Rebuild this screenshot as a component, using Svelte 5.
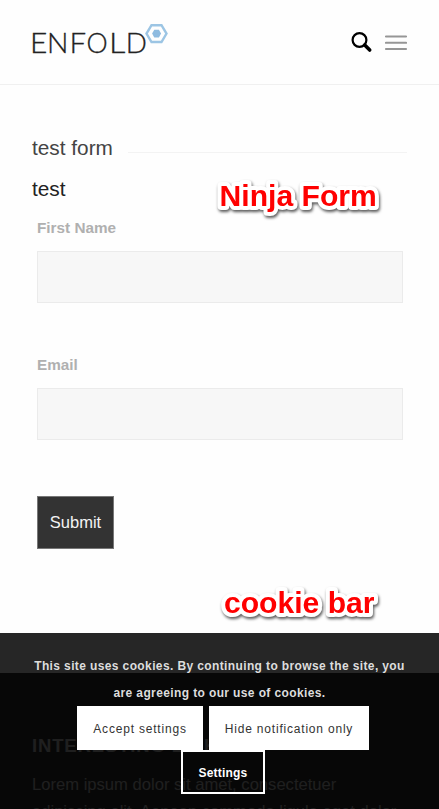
<script lang="ts">
  const fields = [
    { id: 'first-name', label: 'First Name', type: 'text' },
    { id: 'email', label: 'Email', type: 'email' },
  ];

  const logoLetters = [
    { char: 'E', x: 30, stretch: 1.13 },
    { char: 'N', x: 46.9, stretch: 1.07 },
    { char: 'F', x: 69.4, stretch: 1.11 },
    { char: 'O', x: 86.6, stretch: 1.01 },
    { char: 'L', x: 108.9, stretch: 1.22 },
    { char: 'D', x: 125.7, stretch: 1.05 },
  ];
</script>

<div class="page">
  <header class="header">
    <svg class="logo" width="140" height="44" viewBox="30 18 140 44" aria-label="Enfold">
      {#each logoLetters as letter (letter.char)}
        <text transform="translate({letter.x} 53) scale({letter.stretch} 1)" class="logo-text">{letter.char}</text>
      {/each}
      <path d="M151.5 25.2h10l5 8.4-5 8.4h-10l-5-8.4z" fill="none" stroke="#9cc5e4" stroke-width="2.4" />
      <path d="M154.3 29.7h4.6l2.2 3.9-2.2 3.9h-4.6l-2.2-3.9z" fill="#8ebbe0" />
    </svg>
    <div class="header-icons">
      <svg width="22" height="22" viewBox="0 0 22 22" aria-label="Search">
        <circle cx="8.5" cy="8" r="6.9" fill="none" stroke="#000" stroke-width="2.2" />
        <path d="M13.7 13l5 5" stroke="#000" stroke-width="3.6" stroke-linecap="round" />
      </svg>
      <svg width="22" height="16" viewBox="0 0 22 16" aria-label="Menu">
        <path d="M.8 1.5h20.4M.8 7.8h20.4M.8 14h20.4" stroke="#969696" stroke-width="1.9" stroke-linecap="round" />
      </svg>
    </div>
  </header>

  <main class="main">
    <div class="heading">
      <h1>test form</h1>
      <span class="rule"></span>
    </div>
    <h2>test</h2>

    <form class="form">
      {#each fields as field (field.id)}
        <div class="field">
          <label for={field.id}>{field.label}</label>
          <input id={field.id} type={field.type} />
        </div>
      {/each}
      <button class="submit" type="button">Submit</button>
    </form>
  </main>

  <footer class="footer">
    <h3>INTERESTING LINKS</h3>
    <p>Lorem ipsum dolor sit amet, consectetuer<br />adipiscing elit. Aenean commodo ligula eget dolor.</p>
  </footer>

  <svg class="callout callout-form" width="180" height="54">
    <text x="8.6" y="34">Ninja Form</text>
  </svg>
  <svg class="callout callout-cookie" width="180" height="54">
    <text x="8" y="34">cookie bar</text>
  </svg>

  <div class="cookie-bar">
    <p>This site uses cookies. By continuing to browse the site, you<br />are agreeing to our use of cookies.</p>
    <div class="cookie-actions">
      <button class="cookie-btn accept">Accept settings</button>
      <button class="cookie-btn hide">Hide notification only</button>
    </div>
    <button class="cookie-btn settings">Settings</button>
  </div>
</div>

<style>
  :global(body) {
    background: #fff;
  }

  .page {
    position: relative;
    display: flex;
    flex-direction: column;
    height: 809px;
    overflow: hidden;
    background: #fefefe;
    font-family: 'Liberation Sans', Arial, sans-serif;
  }

  h1, h2, h3, p {
    margin: 0;
    font-weight: 400;
  }

  button {
    font-family: inherit;
    border-radius: 0;
    white-space: nowrap;
  }

  .header {
    box-sizing: border-box;
    display: flex;
    flex-shrink: 0;
    justify-content: space-between;
    height: 85px;
    padding: 18px 32px 0 30px;
    border-bottom: 1px solid #f0f0f0;
  }
  .logo-text {
    font: 300 26.5px Lato, sans-serif;
    fill: #222;
    stroke: #222;
    stroke-width: 0.3px;
  }
  .header-icons {
    display: flex;
    align-items: center;
    gap: 12px;
    height: 50px;
  }

  .main {
    box-sizing: border-box;
    flex-shrink: 0;
    height: 588px;
    padding: 50px 32px 0;
  }
  .heading {
    display: flex;
    align-items: center;
    gap: 15px;
    height: 26px;
  }
  h1 {
    font-size: 20.8px;
    line-height: 26px;
    color: #444;
  }
  .rule {
    flex: 1;
    height: 1px;
    margin-top: 9px;
    background: #f3f3f3;
  }
  h2 {
    margin-top: 15px;
    font-size: 20.8px;
    line-height: 26px;
    color: #222;
  }

  .form {
    padding: 16px 5px 0;
  }
  .field {
    height: 137px;
  }
  .field label {
    display: block;
    margin-bottom: 13px;
    font-size: 15.3px;
    font-weight: 700;
    line-height: 20px;
    color: #b0b0b0;
  }
  .field input {
    box-sizing: border-box;
    display: block;
    width: 366px;
    height: 52px;
    padding: 0 12px;
    border: 1px solid #ebebeb;
    border-radius: 0;
    background: #f7f7f7;
  }
  .submit {
    box-sizing: border-box;
    display: block;
    width: 77px;
    height: 53px;
    margin-top: 4px;
    padding: 0;
    border: 1px solid #777;
    background: #333;
    color: #f3f3f3;
    font-size: 16.5px;
  }

  .footer {
    flex: 1;
    padding: 60px 32px 0;
    background: #333;
  }
  h3 {
    font-size: 18.5px;
    font-weight: 700;
    line-height: 26px;
    letter-spacing: 0.85px;
    color: #ccc;
  }
  .footer p {
    margin-top: 12px;
    font-size: 16.6px;
    line-height: 27px;
    color: #ccc;
    white-space: nowrap;
  }

  .callout {
    position: absolute;
    overflow: visible;
    font-size: 30.1px;
    font-weight: 700;
    filter: drop-shadow(1px 2px 1.5px rgba(0, 0, 0, 0.65));
  }
  .callout text {
    fill: #f00;
    stroke: #fff;
    stroke-width: 8px;
    stroke-linejoin: round;
    paint-order: stroke;
  }
  .callout-form {
    left: 211px;
    top: 172px;
  }
  .callout-cookie {
    left: 216px;
    top: 579px;
  }

  .cookie-bar {
    position: absolute;
    inset: auto 0 0;
    box-sizing: border-box;
    display: flex;
    flex-direction: column;
    align-items: center;
    height: 176px;
    padding-top: 20px;
    background: rgba(0, 0, 0, 0.85);
  }
  .cookie-bar p {
    height: 53px;
    font-size: 12px;
    font-weight: 700;
    line-height: 27px;
    letter-spacing: 0.38px;
    color: #ddd;
    text-align: center;
    white-space: nowrap;
  }
  .cookie-actions {
    display: flex;
    gap: 6px;
    margin-left: 7px;
  }
  .cookie-btn {
    box-sizing: border-box;
    height: 44px;
    padding: 2px 0 0;
    border: 0;
    background: #fff;
    color: #333;
    font-size: 12px;
    letter-spacing: 0.8px;
  }
  .accept {
    width: 126px;
  }
  .hide {
    width: 160px;
  }
  .settings {
    width: 84px;
    margin-left: 7px;
    border: 2.5px solid #fff;
    background: transparent;
    color: #fff;
    font-weight: 700;
    letter-spacing: 0.2px;
  }
</style>
